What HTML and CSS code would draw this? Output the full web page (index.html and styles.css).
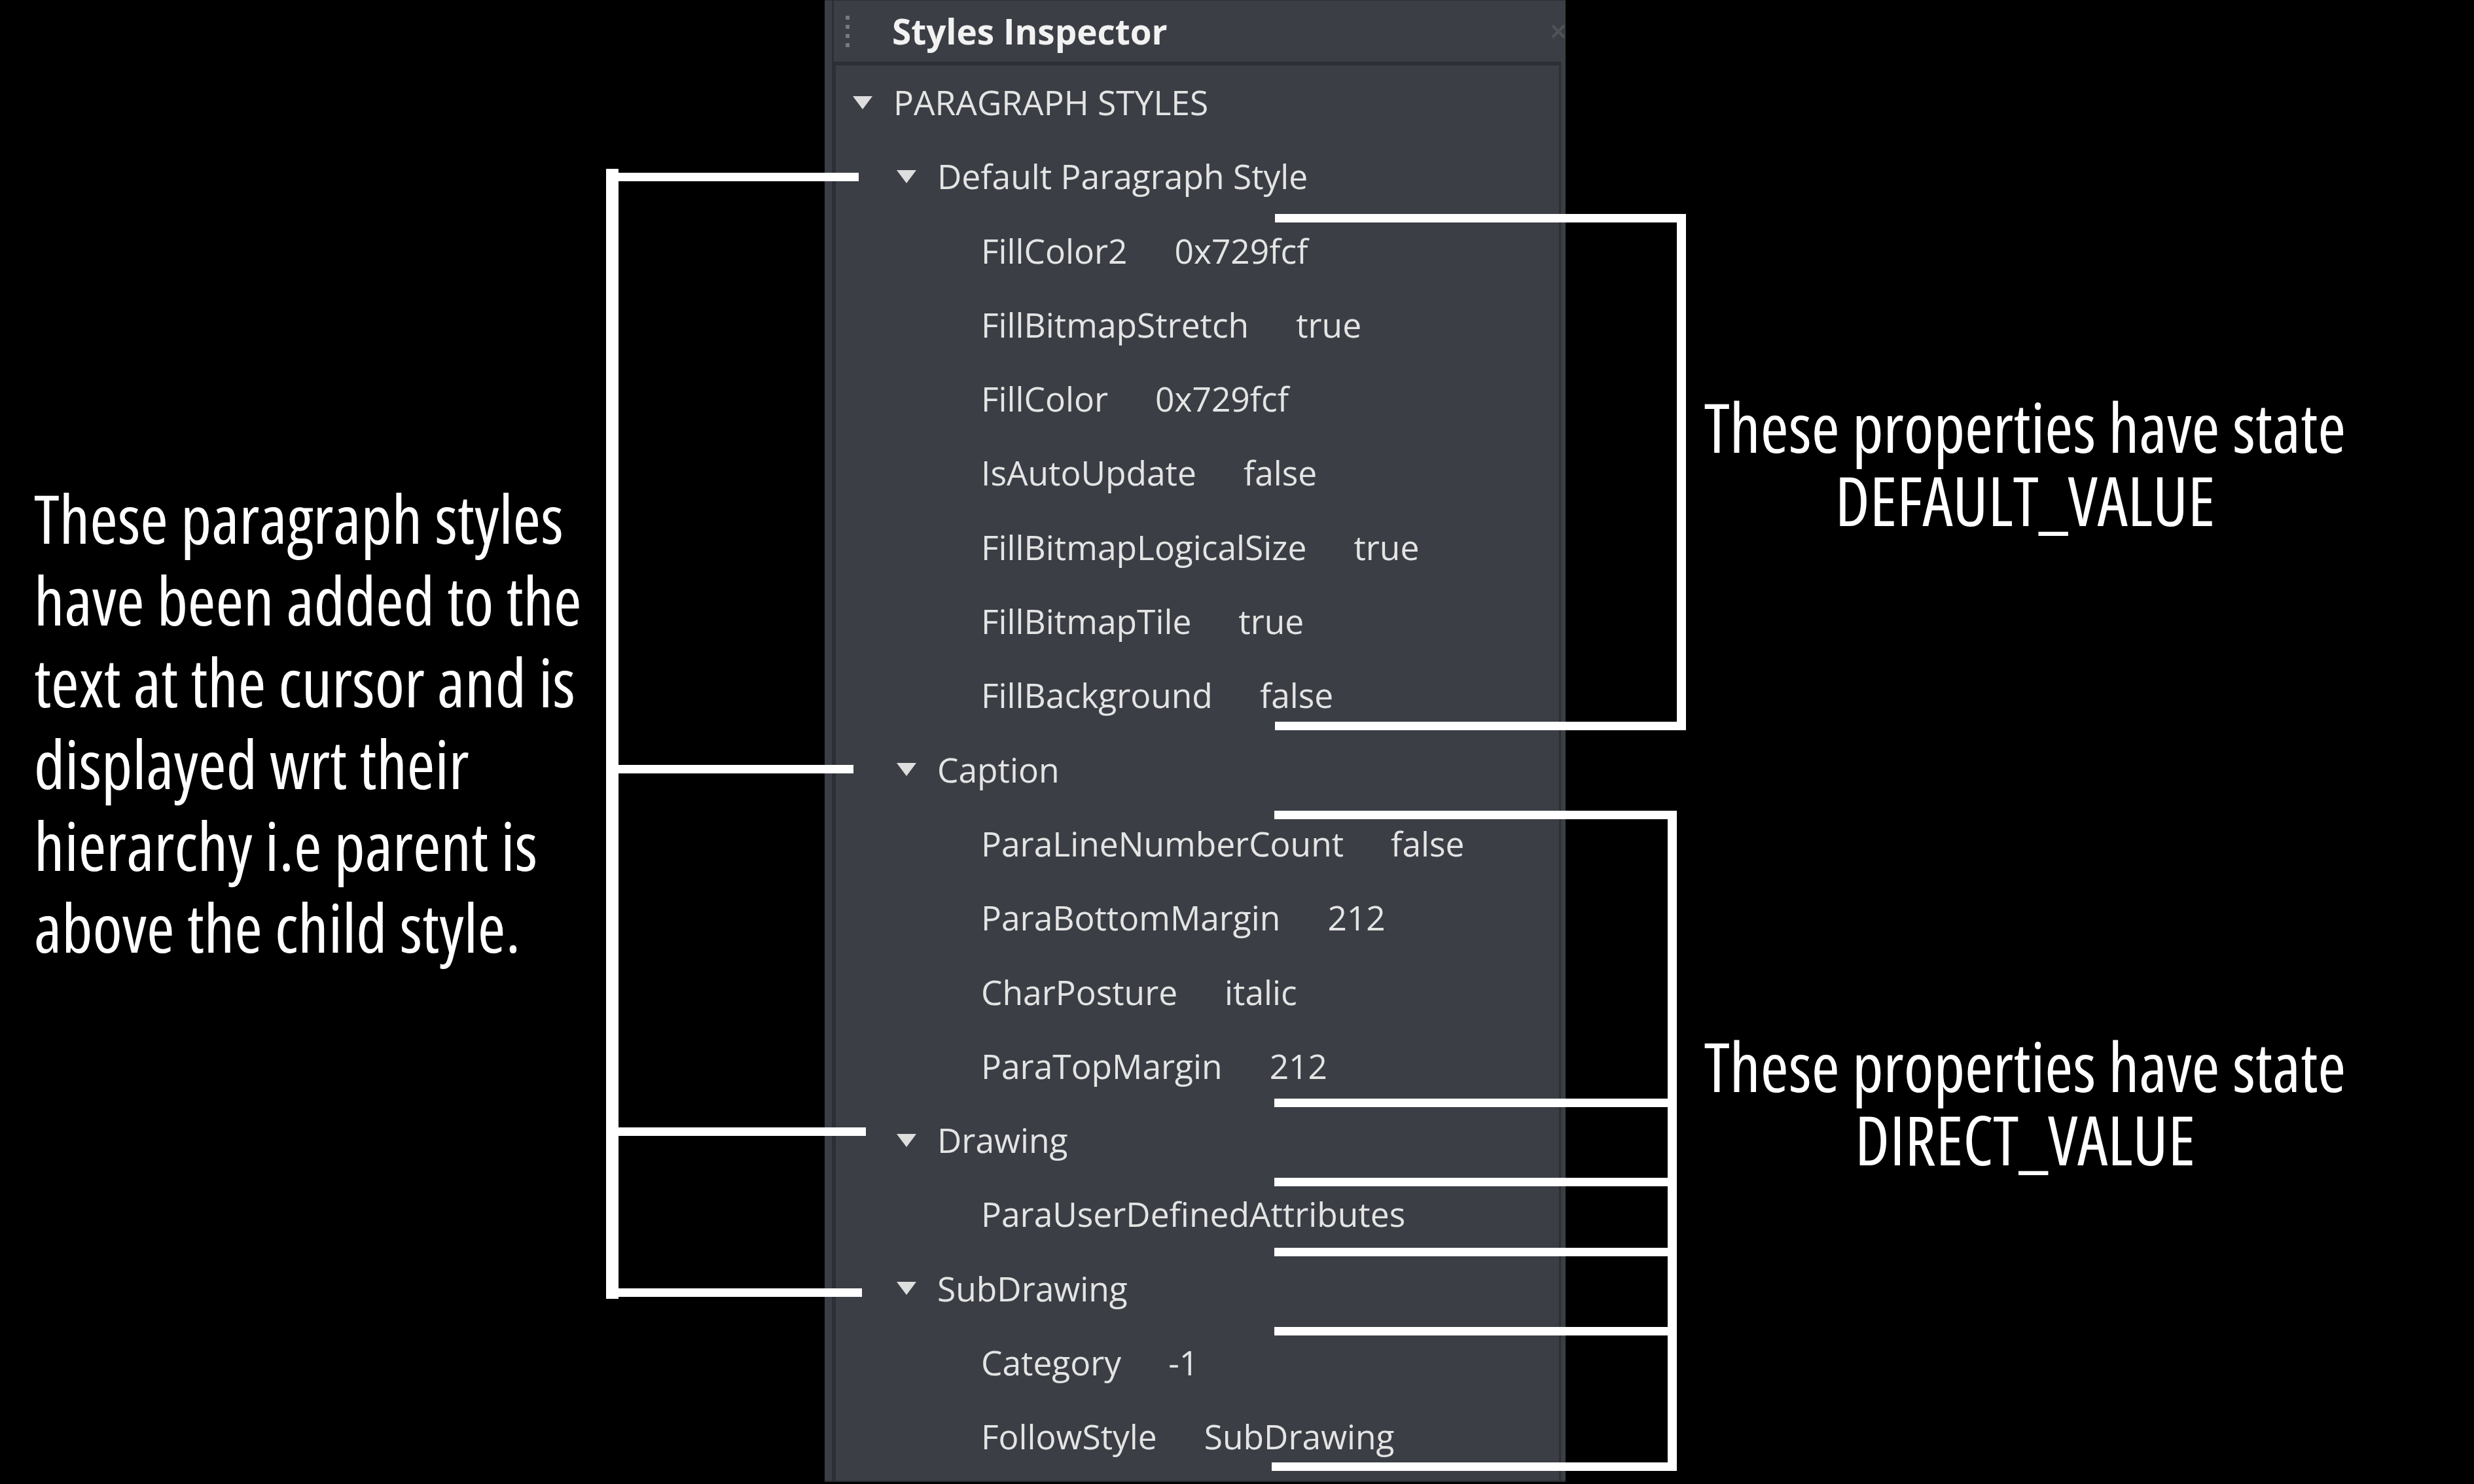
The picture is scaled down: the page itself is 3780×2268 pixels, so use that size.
FILE: index.html
```html
<!DOCTYPE html>
<html lang="en">

<head>
    <meta charset="UTF-8">
    <meta name="viewport" content="width=device-width, initial-scale=1.0">
    <title>Styles Inspector</title>
    <link rel="stylesheet" href="styles.css">
</head>

<body>
    <div class="stage">
        <div class="note-left">
            <p class="note">These paragraph styles<br>have been added to the<br>text at the cursor and is<br>displayed wrt their<br>hierarchy i.e parent is<br>above the child style.</p>
        </div>

        <div class="panel">
            <div class="panel-head">
                <span class="grip"><i></i><i></i><i></i><i></i></span>
                <span class="title">Styles Inspector</span>
                <svg class="close" width="22" height="22" viewBox="0 0 22 22">
                    <path d="M2 2 L20 20 M20 2 L2 20" stroke="#4f5358" stroke-width="4" fill="none" />
                </svg>
            </div>

            <div class="panel-body">
                <div class="row lvl0"><span class="twisty open"></span><span class="key">PARAGRAPH STYLES</span></div>

                <div class="row lvl1"><span class="twisty open"></span><span class="key">Default Paragraph Style</span></div>
                <div class="row lvl2"><span class="twisty"></span><span class="key">FillColor2</span><span class="val">0x729fcf</span></div>
                <div class="row lvl2"><span class="twisty"></span><span class="key">FillBitmapStretch</span><span class="val">true</span></div>
                <div class="row lvl2"><span class="twisty"></span><span class="key">FillColor</span><span class="val">0x729fcf</span></div>
                <div class="row lvl2"><span class="twisty"></span><span class="key">IsAutoUpdate</span><span class="val">false</span></div>
                <div class="row lvl2"><span class="twisty"></span><span class="key">FillBitmapLogicalSize</span><span class="val">true</span></div>
                <div class="row lvl2"><span class="twisty"></span><span class="key">FillBitmapTile</span><span class="val">true</span></div>
                <div class="row lvl2"><span class="twisty"></span><span class="key">FillBackground</span><span class="val">false</span></div>

                <div class="row lvl1"><span class="twisty open"></span><span class="key">Caption</span></div>
                <div class="row lvl2"><span class="twisty"></span><span class="key">ParaLineNumberCount</span><span class="val">false</span></div>
                <div class="row lvl2"><span class="twisty"></span><span class="key">ParaBottomMargin</span><span class="val">212</span></div>
                <div class="row lvl2"><span class="twisty"></span><span class="key">CharPosture</span><span class="val">italic</span></div>
                <div class="row lvl2"><span class="twisty"></span><span class="key">ParaTopMargin</span><span class="val">212</span></div>

                <div class="row lvl1"><span class="twisty open"></span><span class="key">Drawing</span></div>
                <div class="row lvl2"><span class="twisty"></span><span class="key">ParaUserDefinedAttributes</span></div>

                <div class="row lvl1"><span class="twisty open"></span><span class="key">SubDrawing</span></div>
                <div class="row lvl2"><span class="twisty"></span><span class="key">Category</span><span class="val">-1</span></div>
                <div class="row lvl2"><span class="twisty"></span><span class="key">FollowStyle</span><span class="val">SubDrawing</span></div>
            </div>
        </div>

        <div class="notes-right">
            <div class="note note-state note-default">
                <div>These properties have state</div>
                <div>DEFAULT_VALUE</div>
            </div>
            <div class="note note-state note-direct">
                <div>These properties have state</div>
                <div>DIRECT_VALUE</div>
            </div>
        </div>

        <!-- bracket lines drawn over the screenshot -->
        <svg class="marks" width="3780" height="2268" viewBox="0 0 3780 2268">
            <g fill="#fff">
                <!-- left: styles hierarchy -->
                <rect x="926" y="258" width="19" height="1727" />
                <rect x="926" y="264" width="386" height="13" />
                <rect x="926" y="1169" width="378" height="13" />
                <rect x="926" y="1723" width="397" height="13" />
                <rect x="926" y="1969" width="391" height="13" />

                <!-- right: default values -->
                <rect x="1948" y="327" width="628" height="13" />
                <rect x="1948" y="1103" width="628" height="13" />
                <rect x="2562" y="327" width="14" height="789" />

                <!-- right: direct values -->
                <rect x="1947" y="1239" width="615" height="13" />
                <rect x="1947" y="1679" width="615" height="13" />
                <rect x="1947" y="1800" width="615" height="13" />
                <rect x="1947" y="1907" width="615" height="13" />
                <rect x="1947" y="2028" width="615" height="13" />
                <rect x="1943" y="2235" width="619" height="13" />
                <rect x="2548" y="1239" width="14" height="1009" />
            </g>
        </svg>
    </div>
</body>

</html>
```

FILE: styles.css
```css
html,
body {
    margin: 0;
    padding: 0;
    background-color: #000;
}

.stage {
    position: relative;
    display: flex;
    width: 3780px;
    height: 2268px;
    overflow: hidden;
}

/* annotation texts */
.note {
    margin: 0;
    font-family: "Open Sans", "Noto Sans", sans-serif;
    font-stretch: 75%;
    font-size: 103px;
    line-height: 125px;
    color: #fff;
    white-space: nowrap;
}

.note-left {
    box-sizing: border-box;
    width: 1260px;
    padding: 729px 0 0 52px;
}

.notes-right {
    flex: 1;
    padding-left: 112px;
}

.note-state {
    width: 1180px;
    font-size: 104px;
    line-height: 112px;
    text-align: center;
}

.note-state div {
    height: 112px;
}

.note-default {
    margin-top: 596px;
}

.note-direct {
    margin-top: 753px;
}

/* styles inspector panel */
.panel {
    display: flex;
    flex-direction: column;
    box-sizing: border-box;
    width: 1132px;
    height: 2265px;
    padding-left: 11px;
    background-color: #3b3f45;
    border-top: 1px solid #2b2e33;
    border-bottom: 2px solid #26292d;
    font-family: "Open Sans", "Noto Sans", sans-serif;
}

.panel-head {
    display: flex;
    align-items: center;
    height: 93px;
    padding-left: 18px;
    border-left: 3px solid #2c2f34;
}

.grip {
    display: flex;
    flex-direction: column;
    gap: 8px;
    width: 6px;
}

.grip i {
    display: block;
    width: 6px;
    height: 6px;
    background-color: #777a80;
}

.title {
    margin-left: 65px;
    font-size: 53px;
    font-weight: 700;
    color: #f2f2f2;
}

.close {
    margin-left: auto;
    margin-right: 0;
}

.panel-body {
    flex: 1;
    margin-right: 7px;
    border-top: 6px solid #2c2f34;
    border-left: 6px solid #2c2f34;
    border-right: 3px solid #2c2f34;
}

.row {
    display: flex;
    align-items: center;
    height: 113.3px;
    line-height: 113.3px;
    font-size: 51.5px;
    color: #e4e4e4;
    white-space: nowrap;
}

.lvl0 {
    padding-left: 26px;
}

.lvl1 {
    padding-left: 93px;
}

.lvl2 {
    padding-left: 160px;
}

.twisty {
    flex: none;
    width: 30px;
    height: 20px;
    margin-right: 32px;
}

.twisty.open {
    box-sizing: border-box;
    width: 0;
    height: 0;
    margin-right: 32px;
    border-left: 15px solid transparent;
    border-right: 15px solid transparent;
    border-top: 20px solid #dedede;
}

.val {
    margin-left: 72px;
}

.marks {
    position: absolute;
    top: 0;
    left: 0;
    pointer-events: none;
}
```
